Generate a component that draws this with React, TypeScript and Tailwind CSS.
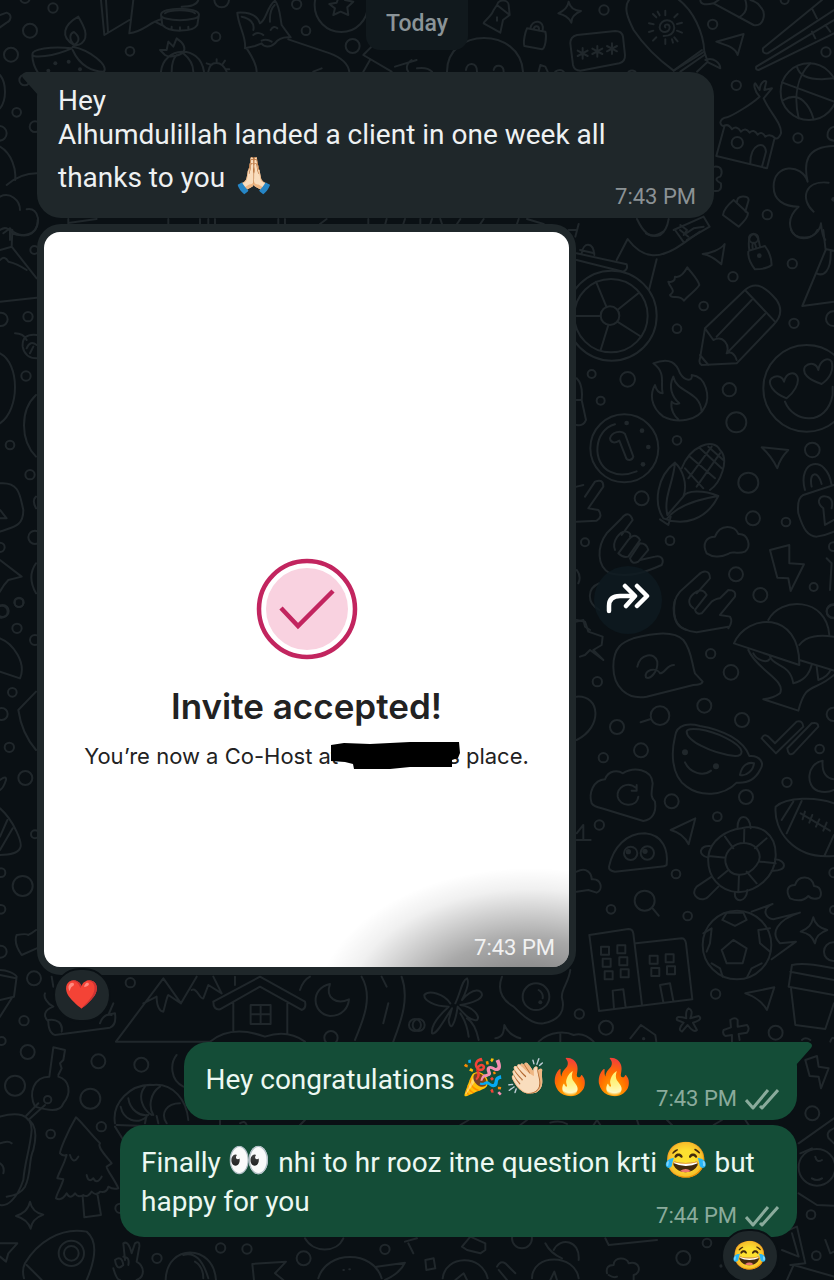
import type { ReactNode } from 'react';

interface DoodleTile {
  x: number;
  y: number;
  rings: number[][];
  dots?: number[][];
  lines: string[];
}

// Doodles are drawn on tiles at three times their final size.
const TILES: DoodleTile[] = [
  {
    x: 0,
    y: 0,
    rings: [
      [159, 24, 14], [90, 92, 21], [33, 164, 21], [390, 154, 13], [648, 110, 13], [890, 13, 14],
      [918, 92, 13], [1058, 138, 21], [665, 0, 22], [50, 337, 13], [-2, 400, 22], [74, 240, 16],
      [105, 380, 16], [75, -5, 14], [1024, 16, 80],
    ],
    dots: [[166, 190, 6], [206, 185, 6], [240, 208, 6], [145, 212, 6]],
    lines: [
      'M215 145C150 138 97 148 97 163C97 176 160 170 215 145M97 165C97 190 105 205 115 220M222 135C180 110 190 75 235 50C250 75 270 110 245 130Q235 138 222 135M222 135C205 115 210 100 222 96C240 110 240 125 222 135M218 150C240 200 280 215 312 215C325 195 270 150 218 140',
      'M0 45L20 38C40 45 30 65 20 68L0 82',
      'M303 0L313 105L388 60M318 0L324 95M400 0L388 100C430 95 450 65 485 58M465 65L485 75',
      'M483 44C483 20 597 20 597 44C597 66 483 66 483 44L487 75C510 100 580 95 592 75L597 44M545 20Q590 20 595 0M515 80V86M540 82V88M565 80V86',
      'M495 40C510 28 570 28 585 40',
      'M480 150L495 165C510 175 540 165 550 158C560 140 545 125 530 115L520 140L505 125L500 150L480 150M483 215C490 140 600 130 612 215M515 215Q515 180 530 165M550 160Q580 185 580 215',
      'M625 215C630 180 665 180 680 215M620 190L635 195M650 178V186M675 182L668 192M688 208h-10',
      'M712 38C760 35 775 55 780 70C800 60 800 20 825 2C840 20 840 50 845 75L872 112C850 110 835 115 825 130C810 145 790 140 785 130L765 138L735 145C740 110 715 80 712 38M725 50C750 55 765 70 760 90M810 65Q808 30 824 15M760 105C770 95 785 100 790 105M812 90Q822 75 832 85M785 122Q800 115 815 125M740 145C760 175 770 195 770 215M865 118L990 160C1030 175 1045 195 1048 215M940 215L965 205',
      'M1024 -20L1035 0L1060 5L1042 22L1045 45L1022 35L1000 45L1005 25L988 12L1010 8L1015 -5',
      'M1115 140L1090 165L1175 215M1110 180L1090 215M1235 180C1215 195 1220 210 1225 215M1185 200L1250 180',
      'M0 225C20 250 20 300 0 325M0 440C35 460 50 510 45 540M20 555C50 530 80 520 110 520M0 590C30 575 60 600 60 630M80 628C120 620 125 680 95 700C70 715 40 700 30 685V720M10 700L30 685',
      'M205 672V657M210 668L290 657M505 657V672M600 657V672M625 657v15M645 657v15M835 657v15M855 657v15M960 672L980 657M1105 657V672M1160 657l-4 15M1215 657l-5 15',
    ],
  },
  {
    x: 417,
    y: 0,
    rings: [
      [561, 30, 14], [887, 73, 14], [1227, 156, 14], [958, 256, 14], [1143, 414, 14],
      [1051, 644, 14], [1010, 715, 14], [1103, 0, 12], [1176, 275, 85], [961, 428, 17],
    ],
    dots: [[1250, 598, 7]],
    lines: [
      'M225 40C210 60 200 65 200 70L250 98L258 60L278 45L240 15L230 30ZM240 15C245 -5 275 0 275 15L278 45M240 52v10',
      'M330 85L385 95C390 110 385 145 375 148L322 138C318 125 325 95 330 85M340 85C345 55 385 60 377 92M350 88C352 75 368 75 366 92',
      'M455 5C460 25 475 32 492 33C475 40 463 50 463 68C455 50 440 45 424 40C440 33 452 25 455 5Z',
      'M480 105L595 93Q615 93 618 110L624 165Q625 185 607 190L490 212Q472 212 468 195L460 130Q460 110 480 105',
      'M497 144V176M482 152L512 168M512 152L482 168M541 138V170M526 146L556 162M556 146L526 162M585 130V162M570 138L600 154M600 138L570 154',
      'M640 -5C615 20 635 60 650 90C690 150 740 190 770 212L862 155C860 100 830 30 780 -5',
      'M745 82C738 75 755 68 758 80C760 100 730 102 728 82C728 55 772 52 772 84Q770 108 740 108',
      'M745 32V46M745 118V132M696 70L710 73M780 92L795 98M708 42L718 52M772 112L782 124M782 42L772 52M718 112L708 122M696 96L709 92M780 72L795 68M765 118L768 128M722 35L728 46',
      'M770 212L855 150M790 215L862 165M862 155L872 185L840 215M865 180C890 170 910 190 910 205L875 188',
      'M850 0C850 15 870 15 890 10L1010 75C1040 80 1050 40 1030 20C1020 5 1000 0 1000 0M985 0C995 30 980 45 965 52M890 10L905 0',
      'M898 125L980 102L962 165C955 140 925 135 898 125Z',
      'M1038 145Q1035 162 1052 160L1251 30M1038 145L1215 0M1018 200L1251 60M1025 210L1251 100M1018 200Q1015 210 1025 210M1185 95L1195 115M1225 75L1240 95M1185 25L1200 55',
      'M1140 200C1150 240 1210 240 1251 235M1095 247L1251 305M1180 190C1140 230 1130 290 1145 355M1100 300C1150 270 1180 320 1190 358',
      'M1028 290C1000 315 950 345 930 352Q912 355 910 368Q912 378 920 378M1040 295C1060 340 1095 370 1092 400Q1085 418 1075 415M1028 290C1010 270 1010 250 1015 250L1028 270C1030 245 1045 240 1048 245L1042 270L1065 265L1040 295M920 378Q935 370 945 388Q960 375 972 395Q985 380 998 398Q1010 385 1022 404Q1035 392 1045 410Q1060 400 1075 415M922 380L898 468L1050 505L1072 418M1000 490C1000 430 1045 420 1047 455L1035 500',
      'M1172 545C1155 490 1070 490 1070 560C1070 600 1100 620 1145 620C1100 660 1120 715 1160 715C1190 715 1210 690 1212 670C1215 700 1220 715 1225 720M1172 545C1160 490 1165 440 1251 438M1190 635C1150 600 1160 540 1235 548M1251 380Q1230 385 1232 410Q1235 420 1251 422',
      'M893 500C915 498 918 515 910 530C890 535 900 545 912 550C915 570 905 575 893 573',
      'M950 600L993 640Q993 655 965 680L918 645Q920 625 950 600M960 605C960 585 995 585 995 600L985 635',
      'M90 215C90 80 310 80 318 215M147 210C150 185 180 185 180 215M230 210C235 190 260 195 260 215M0 205Q30 200 45 215M365 215L370 195L385 200L392 215M415 215Q430 205 440 215M635 215Q645 208 655 215',
      'M660 657C680 700 700 715 730 705Q750 690 755 657M770 690L860 650L878 680L810 720M790 675L810 690L800 705L830 685L860 680M485 672L475 710M455 690H480M10 672V657M45 657L40 672M75 672L70 657M130 657L120 672M200 657L190 672M300 672L305 657M330 657L380 672',
    ],
  },
  {
    x: 560,
    y: 230,
    rings: [
      [155, 257, 135], [153, 257, 110], [150, 257, 28], [697, 101, 14], [519, 140, 14],
      [431, 228, 13], [351, 296, 13], [702, 280, 14], [95, 432, 12], [203, 448, 22],
      [122, 512, 12], [508, 479, 20], [529, 577, 30], [351, 631, 13], [757, 660, 22],
      [565, 758, 30], [245, 805, 21], [579, 865, 21], [678, 876, 13], [330, 932, 13],
      [75, 937, 12], [528, 1033, 21], [601, 1095, 21], [761, 1071, 12], [820, 266, 22],
      [820, 950, 13], [820, 1143, 20], [740, 475, 130], [193, 655, 102],
    ],
    dots: [[598, 77, 7], [200, 579, 7], [246, 602, 7], [265, 651, 7], [249, 703, 7]],
    lines: [
      'M108 155L140 232M235 190L175 238M240 318L172 275M145 285L122 360M50 258H122',
      'M50 90L190 125Q205 118 200 103L50 70M65 70C70 35 100 35 103 75M60 60L103 70',
      'M170 90L203 27C250 90 300 90 370 40L420 5M290 88L267 180M258 10Q280 25 310 5M345 0L370 35M360 0L385 20',
      'M428 72C450 70 480 60 494 42L484 103C470 90 450 75 428 72',
      'M568 62L615 48Q635 75 635 105Q620 118 585 118Q563 90 565 65M568 60C560 5 590 0 597 35L600 50M578 55C575 35 585 32 588 52',
      'M325 155C340 158 345 150 345 140C360 145 372 130 382 112C395 130 415 150 418 165C405 185 385 195 372 212C355 190 335 210 330 195C350 180 330 175 325 155Z',
      'M435 295L555 180C590 150 620 175 650 210C670 240 660 265 640 285L530 400L425 405Q415 400 420 385ZM555 180L645 275M470 320L575 210M505 365L615 252M435 295L460 330C490 315 510 345 500 370Q520 360 530 390M420 375L445 405',
      'M280 400C330 380 350 400 360 430C375 455 400 455 395 435C440 440 450 500 435 530C415 575 350 580 310 560C270 530 270 490 285 465C290 485 300 490 308 490C300 460 320 430 280 400ZM340 440C350 490 420 480 425 545M340 440C325 470 335 500 358 520C345 525 340 520 335 515C330 540 345 560 355 568',
      'M680 505C640 490 620 460 635 445C655 430 670 445 672 455C680 425 705 425 712 440C720 460 700 490 680 505ZM785 462C745 450 725 430 735 410C750 395 770 400 775 420C780 390 805 380 815 395C822 420 810 445 785 462M675 515C700 580 800 590 818 495V470',
      'M165 583C100 600 95 700 150 725C180 740 210 732 230 724M150 625C155 605 185 600 195 612L220 680C215 695 200 692 197 680L178 632C165 640 152 640 150 625',
      'M345 698C290 740 280 820 310 865C370 890 440 870 475 798C430 780 380 780 370 800C385 760 365 715 345 698M345 698C340 760 310 800 322 855L370 800M322 865C350 830 400 810 475 798M365 715C390 650 460 620 480 660C510 690 480 760 450 780M390 680L465 745M375 715L430 775M420 655L485 715M445 650L490 690M455 650L385 745M480 670L410 770M300 868L325 885L332 860',
      'M440 970C425 940 440 920 465 920C480 880 525 885 535 912C565 910 575 950 555 965C530 975 515 960 505 972C480 985 455 980 440 970Z',
      'M605 652L685 660Q660 685 652 715C640 690 625 670 605 652Z',
      'M735 780C710 690 800 670 815 765M822 765L730 795Q710 805 715 850C730 900 745 920 770 920Q800 915 822 905M755 770C745 725 775 720 785 762M790 835L795 885L822 870M790 835C765 815 780 795 800 800Q822 805 815 835',
      'M630 960L688 945V1000L732 1003L692 1083L685 1045L652 1043Z',
      'M218 870C210 845 195 850 185 865L140 910C110 950 110 1010 150 1030C210 1045 260 1025 305 1005C315 985 300 975 285 980L240 990M218 870L185 915M165 960C155 935 180 900 200 905Q215 910 210 920M175 970L205 930Q225 905 240 930L205 980Q190 985 175 970M210 985L240 940Q260 940 265 960L235 995Q215 1005 210 985',
      'M450 1045C450 1020 430 1020 415 1035L360 1085C330 1120 335 1190 380 1200M450 1045L410 1090M400 1135C380 1120 385 1100 410 1085Q430 1075 440 1095L405 1140Q410 1155 425 1150L455 1115Q470 1105 480 1105L505 1080Q530 1080 525 1100L480 1155L510 1160Q520 1175 505 1195',
      'M50 770L70 765M75 800L105 755Q130 745 130 770L85 835L115 840Q130 860 110 872L50 875M50 445Q70 465 65 510L78 570Q70 590 50 585M50 510H65M50 1020Q65 1040 55 1060M50 1175L70 1170L75 1190L90 1200',
      'M118 1060C80 1075 80 1120 118 1140',
      'M693 0C705 30 760 30 772 0M790 0L797 60L727 228L822 215M770 130C790 140 815 125 812 60M800 58L822 62M800 985L815 1000L810 1080',
    ],
  },
  {
    x: 560,
    y: 600,
    rings: [
      [452, 161, 14], [513, 217, 22], [112, 245, 14], [433, 317, 21], [546, 360, 21],
      [171, 381, 21], [300, 347, 28], [243, 451, 21], [130, 473, 14], [779, 447, 13],
      [681, 547, 14], [335, 604, 21], [558, 591, 21], [472, 650, 13], [118, 675, 14],
      [348, 822, 13], [153, 928, 13], [383, 948, 13], [820, 343, 20], [820, 35, 20],
      [254, 902, 30], [820, 1055, 28], [822, 818, 14], [822, 930, 12], [212, 760, 20],
      [262, 759, 20], [531, 1035, 103],
    ],
    dots: [[375, 457, 9], [468, 499, 9], [205, 755, 8], [255, 754, 8]],
    lines: [
      'M522 130C560 40 720 30 718 195L522 130M625 60C660 -10 800 -10 808 105M718 135C740 105 780 105 822 110M718 180L822 212M565 150C590 210 680 240 660 280Q640 295 610 298L715 332C740 240 760 280 822 225M630 170C640 200 690 190 700 250C740 240 750 215 755 195M580 160C590 180 620 190 628 178M770 200L775 240C795 235 808 220 812 210',
      'M345 0C335 60 350 90 410 97L505 80',
      'M160 200C160 140 190 125 220 115C280 100 340 90 370 120C395 150 395 190 405 220L428 245C425 255 410 255 400 255L260 290C200 300 160 260 160 200ZM232 200C240 160 285 155 292 185C295 215 270 240 258 232C250 210 290 200 300 220C315 220 320 195 342 195',
      'M242 367L270 358M278 925L296 947',
      'M345 410C350 370 390 370 420 378C490 390 550 420 568 468C600 465 615 490 600 510C585 540 560 550 530 548C490 590 420 590 380 560C330 525 335 450 345 410ZM380 395C380 380 440 385 500 415C560 445 550 470 525 468C450 460 380 420 380 395M540 525C545 495 565 485 582 490C580 510 560 530 540 525M375 487C390 520 430 530 453 512',
      'M605 415Q612 400 625 410L645 430L710 365Q728 360 730 380L648 460L605 415M682 445L755 370Q775 365 775 380L700 460Q685 470 682 445',
      'M788 482C740 490 735 560 775 573Q800 580 822 570M788 482C785 520 800 535 822 538',
      'M95 610C85 580 100 540 135 538C145 510 175 510 188 520C220 500 275 505 278 550C275 580 270 590 285 605C290 640 275 660 250 663L125 625Q100 620 95 610M230 565C200 540 170 565 173 590C178 620 230 625 235 590M215 572L230 572V555',
      'M332 690L406 655L386 733Q370 700 332 690Z',
      'M50 60L75 65L85 95L128 110L125 135L100 150L130 180L90 150L75 165L60 170M50 290C120 285 130 380 50 420M50 700L70 675V718M50 720H92M50 815C80 800 95 820 95 838C125 835 130 870 110 878L85 870L50 875',
      'M147 800C160 740 200 700 255 700C310 705 325 750 320 795Q315 800 300 800L165 815Q145 812 147 800Z',
      'M545 685C600 670 650 700 647 770C645 830 590 875 535 877C480 875 440 830 445 770C450 720 500 690 545 685ZM497 790C490 750 530 725 560 730C595 735 610 770 590 795C565 830 510 840 497 790ZM553 685L552 728M620 715L585 745M647 790L600 785M590 850L560 815M535 877L537 825M475 835L505 810M445 768L497 773M495 710L520 745',
      'M533 685C530 640 570 640 572 685M450 738C420 735 410 765 445 773M645 778C680 780 685 815 635 812M455 830L410 860C385 890 430 910 445 890L475 860M525 877C520 910 560 910 562 870',
      'M647 620C680 590 770 590 822 610M647 620C640 690 700 780 822 768M665 660L700 605M680 700L725 603M793 768L822 705M722 640L810 692M735 635L728 658M757 645L748 668M778 658L768 680M800 668L790 692',
      'M690 895C675 870 685 855 705 855C715 825 755 825 762 858C790 860 785 895 775 895Q755 900 745 888Q725 910 690 895Z',
      'M520 1020L560 1045L548 1090L500 1090L485 1050ZM487 960L525 978L560 960L550 938H500ZM430 1000L455 985L450 1030L440 1055M630 985L595 990L600 1030L630 1055M455 1090L480 1105L488 1130M605 1090L575 1105L562 1130M575 935L638 912C600 930 620 955 640 958L720 938C650 960 630 1000 660 1030L708 1025L635 1078',
      'M760 952C765 975 780 985 802 990C780 998 768 1008 765 1030C757 1008 745 1000 722 995C745 985 755 975 760 952Z',
      'M117 1233L88 1005L205 987Q218 987 220 1000L246 1215M117 1233L397 1198L378 1030Q375 1015 365 1015L228 1030M162 1227L158 1172L190 1168L197 1222M310 1207L300 1155L330 1150L340 1203',
      'M123 1040h24v24h-24ZM172 1036h24v24h-24ZM128 1076h24v24h-24ZM178 1072h24v24h-24ZM134 1114h24v24h-24ZM182 1108h24v24h-24ZM269 1067h24v24h-24ZM317 1063h24v24h-24ZM274 1104h24v24h-24ZM321 1099h24v24h-24Z',
    ],
  },
  {
    x: 0,
    y: 960,
    rings: [
      [102, 55, 21], [391, 68, 14], [72, 182, 14], [83, 276, 21], [295, 304, 21], [424, 314, 21],
      [45, 377, 30], [271, 416, 30], [304, 500, 14], [152, 522, 13], [662, 864, 14],
      [741, 867, 14], [471, 895, 14], [911, 895, 21], [1155, 868, 14], [993, 233, 20],
      [5, 243, 12], [1245, 195, 18], [360, 745, 14], [143, 419, 11], [214, 880, 38], [214, 880, 22],
    ],
    lines: [
      'M0 30C20 30 45 40 50 50L42 110L0 120M35 115L0 170M0 45L48 55',
      'M155 50L160 80M135 100C130 110 140 130 160 140C130 150 130 170 145 185C145 215 160 225 165 225L330 203Q350 195 345 160L320 165M340 130L325 165M145 180C170 175 190 190 185 215M300 190Q310 160 335 165',
      'M348 245L490 55L543 130L590 50M430 130L470 110C470 140 480 155 490 155C495 140 500 110 505 105L543 130M575 90C590 80 600 120 610 115L625 75L665 100M348 245H630M640 50L665 100',
      'M640 125L780 50L915 125Q920 145 905 150L780 80L660 148Q640 150 640 125M700 130V212M862 130V220M752 135h60v57h-60ZM782 135v57M752 163h60M630 245C680 205 740 210 795 230C840 215 880 220 915 245M705 50V75',
      'M990 72C930 85 935 160 990 168C1030 168 1045 140 1047 118C1010 135 975 115 990 72Z',
      'M900 90Q910 60 930 50M1085 50C1120 110 1090 180 1065 240M1205 50C1230 120 1200 190 1180 245M1145 50L1160 80M1165 130L1150 190',
      'M160 262L195 270L190 300L180 310L185 325L175 345M160 262L148 350C100 350 85 400 105 440C140 450 180 460 190 430C215 400 210 360 175 350M135 435L85 480M115 430L78 468',
      'M0 470C50 455 95 460 95 510C90 570 75 600 70 660C50 720 20 740 0 735M80 475C110 490 110 530 100 570C85 600 95 640 75 680Q60 705 20 710M0 550Q25 540 35 550M0 610Q15 620 10 640',
      'M228 472C200 520 180 570 180 580Q190 590 200 585C190 620 175 640 172 655L190 658C185 680 170 700 168 715Q185 725 200 700Q210 720 225 700Q235 715 250 705Q262 715 275 695Q290 710 300 695Q320 700 325 680Q340 690 355 685C345 660 320 630 320 620L335 610C320 590 290 560 300 550C270 520 240 480 228 472ZM248 710L253 772L303 765L292 700M210 585Q220 615 235 590M260 645Q265 670 280 655Q290 675 305 650',
      'M530 285C510 310 510 360 550 380M345 490C335 430 390 370 460 375C520 370 560 420 565 480M345 500L370 540M362 440C370 480 410 495 440 470M385 415C390 450 420 470 445 465M435 380C410 410 430 450 455 465M480 380C450 400 445 440 460 465M540 430C500 430 480 460 500 490M350 495L430 498M440 465L435 490M470 468L475 490M660 482V495M720 490Q735 480 740 495M900 495L915 480',
      'M90 725C95 750 110 760 130 764C108 772 95 785 92 806C85 785 72 775 48 768C70 760 85 750 90 725Z',
      'M0 850L52 850L25 880L18 905L0 890',
      'M75 910C110 850 180 800 260 815C290 840 290 890 260 960M75 910Q65 930 72 955M80 915L125 960',
      'M375 900L370 850Q385 840 395 880L405 850Q420 840 418 860L410 905C435 920 435 950 410 960M345 900Q365 885 370 915Q350 935 345 900M370 890Q390 890 385 915M340 925Q350 960 360 960',
      'M497 960C500 850 640 850 648 960M550 885Q600 870 625 955M585 905Q610 920 610 955M762 960L757 912L858 905L825 940L850 960',
      'M955 955C980 870 1120 870 1145 955M1130 920L1215 908Q1200 940 1155 960M1030 930h2M1048 928h2M915 835C940 880 1010 880 1030 835M1215 845L1251 835M1225 850L1240 880',
    ],
  },
  {
    x: 417,
    y: 960,
    rings: [
      [487, 162, 14], [567, 203, 21], [896, 102, 14], [1076, 218, 21], [1186, 460, 21],
      [870, 849, 13], [799, 894, 21], [1182, 764, 13], [1198, 887, 13], [315, 835, 30],
      [5, 195, 18], [357, 110, 40], [1200, 622, 55],
    ],
    dots: [[370, 127, 6], [680, 236, 5], [912, 918, 5]],
    lines: [
      'M115 130C130 100 135 60 150 55Q160 70 135 120C170 80 195 90 195 105Q190 125 130 135C170 140 190 170 180 180C160 185 140 160 122 140C115 190 100 220 95 180L105 145C80 180 60 225 45 220Q40 190 95 140C50 140 20 120 22 105C35 90 80 100 100 130M130 160Q150 190 155 230M150 175Q175 190 185 240',
      'M255 50C240 90 255 120 290 140C320 170 350 195 380 190C430 180 445 150 435 115C430 90 455 70 460 30M365 90Q380 100 377 115',
      'M235 235C260 230 260 215 262 195Q275 225 310 235M365 245C400 210 450 215 470 225Q500 215 530 245M430 220V245M640 235L672 195L715 225L718 245',
      'M815 145Q830 150 820 175L845 168Q860 178 828 188L840 210Q830 220 812 195L795 215Q780 210 800 188L780 180Q775 165 808 175Q805 150 815 145Z',
      'M940 180Q955 170 962 180V200L990 195Q1000 205 990 218L965 222L968 240M940 180L942 202L920 210Q915 222 925 228L945 225V245M1155 240Q1165 230 1180 240M1240 245Q1245 230 1251 235',
      'M985 100L1072 82L1050 150Q1030 115 985 100Z',
      'M1125 15C1170 5 1220 20 1251 25M1125 15L1115 80L1251 105M1122 85L1135 195L1225 207L1251 130M1120 35L1251 60',
      'M1165 300L1200 288L1205 320L1235 325L1212 385L1205 350L1178 348Z',
      'M1145 550L1251 475M1145 700L1200 735L1251 737M1195 590Q1200 610 1215 600M1185 655Q1200 665 1215 655M1251 505Q1225 515 1235 535L1251 550M1150 580L1185 565',
      'M130 495L155 480M310 495L330 480M400 488Q430 480 450 492M530 495L540 480L550 495M660 480L665 495M750 480L765 495M890 495L915 480M985 480L995 495',
      'M135 860L160 830L205 850L205 870L190 880L150 870ZM25 900L50 895L55 925L28 930ZM77 955C85 885 195 880 212 955M115 960L140 940L150 960M240 920Q250 900 265 910L295 940M245 930L270 960M345 955C345 880 475 880 485 955M435 895Q400 880 385 850M410 870C430 830 490 840 485 900M400 960L412 935L420 960M570 940Q565 915 590 915C590 890 630 890 635 910C670 900 675 940 650 945V960M575 945Q590 955 600 950',
      'M565 835L575 855L720 840M1090 820L1140 800L1165 910L1120 915M1125 820L1145 890L1095 870M1110 960L1130 915L1251 950M1225 840L1240 880L1251 875',
    ],
  },
  {
    x: 0,
    y: 220,
    rings: [
      [3, 298, 20], [84, 290, 14], [78, 468, 14], [30, 675, 13], [90, 764, 14], [103, 90, 12],
      [105, 952, 20], [57, 1147, 14], [5, 1175, 18], [0, 982, 14],
    ],
    lines: [
      'M0 30Q20 15 37 40C60 50 115 50 113 0M37 30L35 80L110 175M35 80L0 90M0 120Q15 105 25 125Q50 130 80 150M0 245L110 233M45 340Q70 340 80 360M110 345Q65 340 68 380Q75 415 110 415M80 385Q90 360 110 375M90 400L100 380',
      'M0 400C60 430 60 570 0 610M108 525C60 570 60 660 108 710M0 790C60 785 60 830 70 870C70 920 40 920 0 935M0 895H20L0 870M0 1020L65 1070L25 1080Q10 1095 0 1115M108 1030Q80 1070 108 1120M108 830Q95 840 108 865',
    ],
  },
  {
    x: 0,
    y: 600,
    rings: [
      [57, 8, 13], [8, 33, 18], [51, 85, 14], [105, 120, 15], [37, 277, 13], [5, 342, 18],
      [28, 442, 14], [76, 534, 21], [105, 703, 12], [68, 858, 30], [3, 818, 13], [3, 928, 13],
      [2, 1055, 18],
    ],
    lines: [
      'M0 115C40 130 80 190 60 235L0 215M108 275L55 330Q65 400 108 450M0 540Q20 525 18 540Q10 565 0 570M0 625C40 660 70 730 60 745Q50 765 0 765M0 710L22 660M0 750L38 685M50 1005Q80 1000 85 1005M108 990Q95 1000 85 1005M50 1005Q40 1030 65 1065L110 1045',
    ],
  },
];

function Wallpaper() {
  return (
    <svg
      aria-hidden="true"
      viewBox="0 0 834 1280"
      preserveAspectRatio="xMinYMin slice"
      className="absolute inset-0 h-full w-full text-[#20272b]"
      fill="none"
      stroke="currentColor"
      strokeWidth="6"
      strokeLinecap="round"
      strokeLinejoin="round"
    >
      {TILES.map((tile) => (
        <g key={`${tile.x}-${tile.y}`} transform={`translate(${tile.x} ${tile.y}) scale(0.3333)`}>
          {tile.rings.map(([cx, cy, r]) => (
            <circle key={`${cx}-${cy}-${r}`} cx={cx} cy={cy} r={r} />
          ))}
          {tile.dots?.map(([cx, cy, r]) => (
            <circle key={`${cx}-${cy}`} cx={cx} cy={cy} r={r} fill="currentColor" stroke="none" />
          ))}
          {tile.lines.map((d) => (
            <path key={d} d={d} />
          ))}
        </g>
      ))}
    </svg>
  );
}

function ReadTicks() {
  return (
    <svg aria-label="Delivered" role="img" viewBox="0 0 34 22" className="h-[22px] w-[34px]" fill="none" stroke="currentColor" strokeWidth="3">
      <path d="M1 12L8 20L23 2M15 18L17 20L33 2" strokeLinejoin="round" />
    </svg>
  );
}

function Emoji({ children }: { children: string }) {
  return <span className="text-[35px] leading-[48px]">{children}</span>;
}

interface BubbleProps {
  time: string;
  own?: boolean;
  tail?: boolean;
  className?: string;
  children: ReactNode;
}

function Bubble({ time, own, tail, className = '', children }: BubbleProps) {
  return (
    <div
      className={`relative w-fit max-w-[677px] rounded-[24px] px-[21px] pt-3 pb-[18px] text-[28px] leading-[34px] ${
        own ? 'self-end bg-[#144d37] text-[#ecf8f2]' : 'bg-[#1f272a] text-[#eef1f2]'
      } ${className}`}
    >
      {tail && (
        <svg
          aria-hidden="true"
          viewBox="0 0 40 26"
          className={`absolute top-0 h-[26px] w-10 ${own ? '-right-[15px] text-[#144d37]' : '-left-[15px] -scale-x-100 text-[#1f272a]'}`}
          fill="currentColor"
        >
          <path d="M0 0H36Q42 2 39 6L24 23V26H0Z" />
        </svg>
      )}
      <div className="relative">
        {children}
        {/* keeps the last line clear of the time stamp */}
        {own && <span className="inline-block w-[140px]" />}
      </div>
      <div
        className={`absolute right-[18px] bottom-2 flex items-center gap-2 text-[22px] leading-[26px] ${
          own ? 'text-[#8aab9c]' : 'text-[#8b9295]'
        }`}
      >
        <time>{time}</time>
        {own && <ReadTicks />}
      </div>
    </div>
  );
}

function Reaction({ children, className }: { children: ReactNode; className: string }) {
  return (
    <button
      type="button"
      className={`absolute z-10 flex h-[54px] w-[58px] items-center justify-center rounded-full border-2 border-[#0a1014] bg-[#1f272a] text-[28px] ${className}`}
    >
      {children}
    </button>
  );
}

function InvitePhoto() {
  return (
    <div className="relative flex aspect-[5/7] flex-col items-center overflow-hidden rounded-[16px] bg-white pt-[326px] text-[#222222]">
      <svg aria-hidden="true" viewBox="0 0 102 102" className="size-[102px]" fill="none" stroke="#c2255f" strokeWidth="4.5">
        <circle cx="51" cy="51" r="48" />
        <circle cx="51" cy="51" r="41" fill="#f9d2e0" stroke="none" />
        <path d="M25 50L42 68L77 33" />
      </svg>
      <h2 className="mt-[22px] font-['Inter',sans-serif] text-[35px] leading-[48px] font-semibold">Invite accepted!</h2>
      <p className="mt-2 flex items-center font-['Inter',sans-serif] text-[22px] leading-8 whitespace-nowrap">
        <span>You’re now a Co-Host at</span>
        <svg aria-hidden="true" viewBox="0 0 130 36" className="relative -mr-3 -ml-2 h-9 w-[130px]">
          <path d="M1 7L14 5L40 6L80 4L129 4L130 15L128 20L122 22V29L80 29L60 31L24 31L23 26L15 24L1 23Z" fill="#000" />
        </svg>
        <span>s place.</span>
      </p>
      <div className="absolute inset-0 bg-[radial-gradient(ellipse_215px_142px_at_486px_778px,rgba(0,0,0,0.44)_30%,rgba(0,0,0,0.34)_50%,rgba(0,0,0,0.18)_70%,rgba(0,0,0,0.06)_85%,rgba(0,0,0,0)_100%)]" />
      <time className="absolute right-[14px] bottom-[6px] text-[22px] leading-[26px] text-[#f1f1f1]">7:43 PM</time>
    </div>
  );
}

export default function App() {
  return (
    <main className="relative flex min-h-screen flex-col overflow-hidden bg-[#0a1014] px-[37px] font-['Roboto','Noto_Color_Emoji',sans-serif]">
      <Wallpaper />

      <div className="relative self-center rounded-b-[14px] bg-[#11191d] px-5 pt-[9px] pb-[11px] text-[23px] leading-[30px] font-medium text-[#8b9498]">
        Today
      </div>

      <Bubble time="7:43 PM" tail className="mt-[22px]">
        <p>Hey</p>
        <p>
          Alhumdulillah landed a client in one week all thanks to you <Emoji>🙏🏻</Emoji>
        </p>
      </Bubble>

      <div className="relative mt-[6px] w-[539px] max-w-full rounded-[24px] bg-[#1f272a] px-[7px] py-2">
        <InvitePhoto />
        <Reaction className="-bottom-[47px] left-4">❤️</Reaction>
        <button
          type="button"
          aria-label="Forward"
          className="absolute top-1/2 -right-[86px] flex size-[68px] -translate-y-1/2 items-center justify-center rounded-full bg-[#0e1a20]/80 pb-1 text-white"
        >
          <svg aria-hidden="true" viewBox="0 0 44 32" className="h-8 w-11" fill="none" stroke="currentColor" strokeWidth="4.5" strokeLinecap="round" strokeLinejoin="round">
            <path d="M3 29V24Q3 14 14 14H28M19 4L29 14L20 24M31 4L41 14L31 24" />
          </svg>
        </button>
      </div>

      <Bubble time="7:43 PM" own tail className="mt-[67px]">
        <span>
          Hey congratulations <Emoji>🎉👏🏻🔥🔥</Emoji>
        </span>
      </Bubble>

      <div className="relative mt-[5px] flex flex-col">
        <Bubble time="7:44 PM" own>
          <span>
            Finally <Emoji>👀</Emoji> nhi to hr rooz itne question krti <Emoji>😂</Emoji> but happy for you
          </span>
        </Bubble>
        <Reaction className="right-[18px] -bottom-[46px]">😂</Reaction>
      </div>
    </main>
  );
}
